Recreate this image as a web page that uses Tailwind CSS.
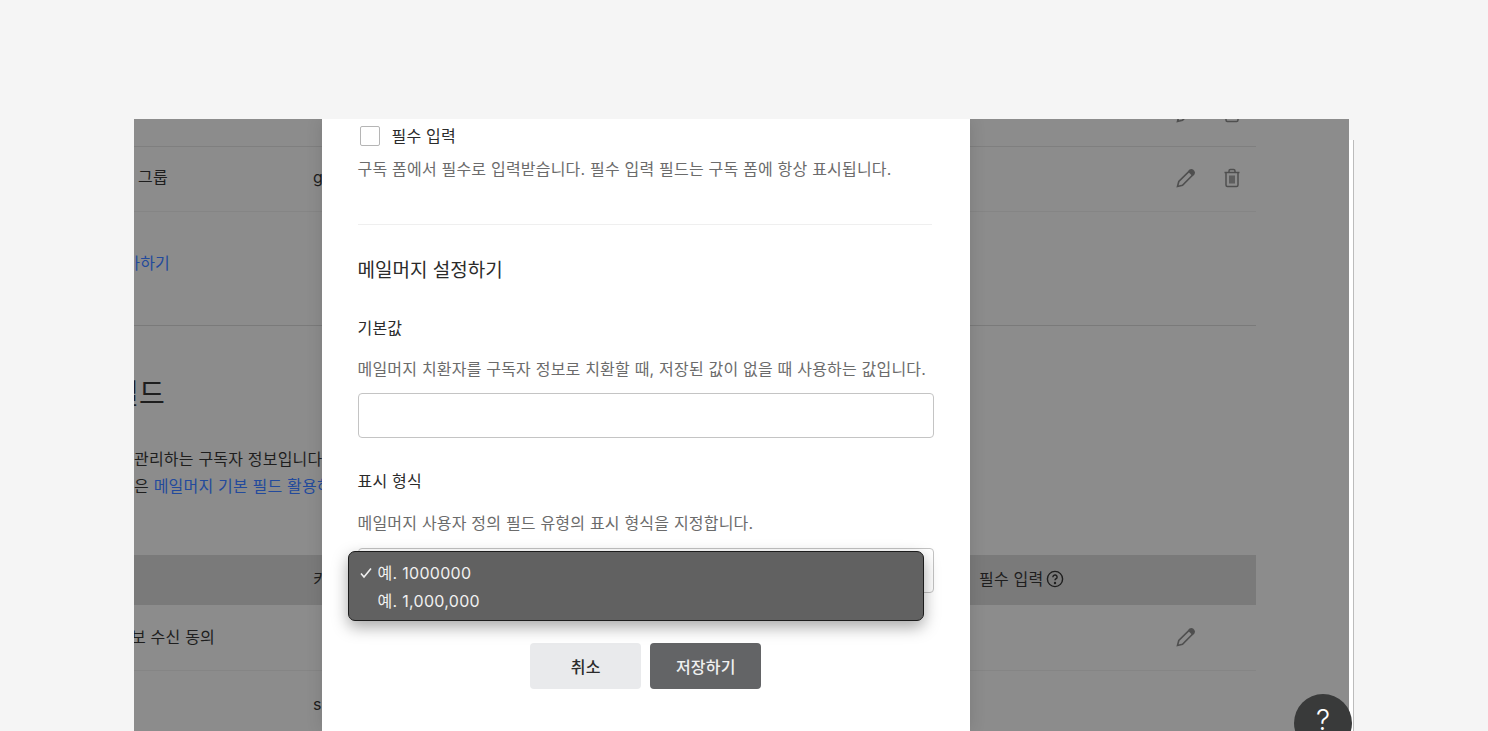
<!DOCTYPE html>
<html lang="ko">

<head>
    <meta charset="UTF-8" />
    <meta name="viewport" content="width=device-width, initial-scale=1.0" />
    <title>메일머지 설정</title>
    <script src="https://cdn.jsdelivr.net/npm/@tailwindcss/browser@4"></script>
</head>

<body class="relative h-[731px] overflow-hidden bg-[#f5f5f5] font-['Inter','Noto_Sans_CJK_KR',sans-serif] text-[16px] leading-6 tracking-[0.2px]">
    <div class="flex h-full pl-[134px] pt-[119px]">
        <!-- Dimmed page behind the modal -->
        <div class="relative h-[612px] w-[1215px] overflow-hidden bg-[#8c8c8c] text-[#1e1e1e]">
            <div class="w-[1122px]">
                <div class="-mt-[37px] flex h-[65px] items-center justify-end gap-[26px] border-b border-[#7f7f7f] pb-[2px] pr-[14px]">
                    <svg class="h-5 w-5 text-[#4f4f4f]" fill="none" stroke="currentColor" stroke-width="1.6" viewBox="0 0 20 20"><path d="M1.5 18.5l1.3-5L13.8 2.6l3.6 3.6L6.5 17.2l-5 1.3z"></path><path d="M14 2.4a2 2 0 012.6-.2l1.2 1.2a2 2 0 01-.2 2.6l-1 1-3.6-3.6 1-1z" fill="currentColor"></path></svg>
                    <svg class="h-5 w-5 text-[#4f4f4f]" fill="none" stroke="currentColor" stroke-width="1.5" viewBox="0 0 20 20"><path d="M2.5 4.5h15M7 4.5V3a1.5 1.5 0 011.5-1.5h3A1.5 1.5 0 0113 3v1.5M4 4.5v12.5a1.5 1.5 0 001.5 1.5h9a1.5 1.5 0 001.5-1.5V4.5M8 7.5v8M10 7.5v8M12 7.5v8"></path></svg>
                </div>
                <div class="flex h-[65px] items-center border-b border-[#858585] pb-[2px]">
                    <span class="mb-[2px] w-[179px] pl-[4px]">그룹</span>
                    <span class="mb-[2px]">group</span>
                    <div class="ml-auto flex gap-[26px] pr-[14px]">
                        <svg class="h-5 w-5 text-[#4f4f4f]" fill="none" stroke="currentColor" stroke-width="1.6" viewBox="0 0 20 20"><path d="M1.5 18.5l1.3-5L13.8 2.6l3.6 3.6L6.5 17.2l-5 1.3z"></path><path d="M14 2.4a2 2 0 012.6-.2l1.2 1.2a2 2 0 01-.2 2.6l-1 1-3.6-3.6 1-1z" fill="currentColor"></path></svg>
                        <svg class="h-5 w-5 text-[#4f4f4f]" fill="none" stroke="currentColor" stroke-width="1.5" viewBox="0 0 20 20"><path d="M2.5 4.5h15M7 4.5V3a1.5 1.5 0 011.5-1.5h3A1.5 1.5 0 0113 3v1.5M4 4.5v12.5a1.5 1.5 0 001.5 1.5h9a1.5 1.5 0 001.5-1.5V4.5M8 7.5v8M10 7.5v8M12 7.5v8"></path></svg>
                    </div>
                </div>
                <div class="flex h-[114px] w-full border-b border-[#7a7a7a]">
                    <div class="mt-[39px] flex h-6 w-[36px] justify-end whitespace-nowrap text-[#234a9c]">필드 추가하기</div>
                </div>

                <div class="mt-[48px] flex h-[40px] w-[31px] justify-end whitespace-nowrap text-[28px] leading-[40px]">사용자 정의 필드</div>
                <div class="mt-[33px] whitespace-nowrap">관리하는 구독자 정보입니다. 구독 폼과 발송 대상에서 사용합니다.</div>
                <div class="mt-[3px] flex h-6 items-center whitespace-nowrap"><span>은&nbsp;</span><span class="text-[#234a9c]">메일머지 기본 필드 활용하기</span></div>

                <div class="mt-[57px] flex h-[50px] items-center bg-[#7a7a7a] pb-[2px]">
                    <span class="w-[179px]"></span>
                    <span class="w-[666px]">키</span>
                    <div class="flex items-center gap-[3px]">
                        <span>필수 입력</span>
                        <svg class="h-[18px] w-[18px]" fill="none" stroke="currentColor" stroke-width="1.4" viewBox="0 0 18 18"><circle cx="9" cy="9" r="7.6"></circle><path d="M6.9 7.2a2.1 2.1 0 114 .8c-.5.7-1.9 1.1-1.9 2.3"></path><circle cx="9" cy="13" r=".5"></circle></svg>
                    </div>
                </div>
                <div class="flex h-[66px] items-center border-b border-[#858585] pb-[2px]">
                    <div class="flex w-[81px] justify-end whitespace-nowrap">광고성 정보 수신 동의</div>
                    <div class="ml-auto pr-[60px]">
                        <svg class="h-5 w-5 text-[#4f4f4f]" fill="none" stroke="currentColor" stroke-width="1.6" viewBox="0 0 20 20"><path d="M1.5 18.5l1.3-5L13.8 2.6l3.6 3.6L6.5 17.2l-5 1.3z"></path><path d="M14 2.4a2 2 0 012.6-.2l1.2 1.2a2 2 0 01-.2 2.6l-1 1-3.6-3.6 1-1z" fill="currentColor"></path></svg>
                    </div>
                </div>
                <div class="flex h-[65px] items-center pl-[179px]">sms</div>
            </div>

            <!-- Modal -->
            <div class="absolute left-[187.5px] top-0 h-full w-[648.5px] bg-white px-[36px] pt-[7px] text-[#6b6b6b] shadow-[0_0_16px_rgba(0,0,0,0.12)]">
                <label class="flex h-5 items-center gap-[12px] pl-[2px] text-[#2b2b2b]">
                    <span class="h-5 w-5 rounded-[2px] border border-[#b5b5b5] bg-white"></span>
                    <span>필수 입력</span>
                </label>
                <p class="mt-[11px]">구독 폼에서 필수로 입력받습니다. 필수 입력 필드는 구독 폼에 항상 표시됩니다.</p>
                <hr class="mt-[43px] mr-[2px] border-[#efefef]" />

                <h3 class="mt-[32px] text-[19px] leading-7 tracking-[0px] text-[#2b2b2b]">메일머지 설정하기</h3>

                <h4 class="mt-[31px] text-[#2b2b2b]">기본값</h4>
                <p class="mt-[17px]">메일머지 치환자를 구독자 정보로 치환할 때, 저장된 값이 없을 때 사용하는 값입니다.</p>
                <input type="text" class="mt-[12px] block h-[45px] w-full rounded-[4px] border border-[#c4c4c4] bg-white" />

                <h4 class="mt-[31px] text-[#2b2b2b]">표시 형식</h4>
                <p class="mt-[18px]">메일머지 사용자 정의 필드 유형의 표시 형식을 지정합니다.</p>
                <div class="relative mt-[13px] h-[45px] rounded-[4px] border border-[#c4c4c4] bg-white">
                    <!-- Open select menu -->
                    <ul class="absolute -left-[11px] top-[2px] h-[70px] w-[576px] rounded-[7px] border border-[#1c1c1c] bg-[#616161] pl-[11px] pt-[7px] text-[16px] leading-7 tracking-[0.3px] text-[#f0f0f0] shadow-[0_6px_16px_rgba(0,0,0,0.35)]">
                        <li class="flex">
                            <svg class="mt-[8px] h-3 w-3 shrink-0" fill="none" stroke="currentColor" stroke-width="1.6" viewBox="0 0 12 12"><path d="M1 6.5l3 3.5L11 1.5"></path></svg>
                            <span class="ml-[6px]">예. 1000000</span>
                        </li>
                        <li class="pl-[18px]">예. 1,000,000</li>
                    </ul>
                </div>
                <div class="mt-[50px] flex justify-center gap-[9px]">
                    <button class="h-[46px] w-[111px] rounded-[4px] bg-[#e9eaec] pt-[1px] font-medium text-[#2b2b2b]">취소</button>
                    <button class="h-[46px] w-[111px] rounded-[4px] bg-[#636466] pt-[1px] font-medium text-[#f0f0f0]">저장하기</button>
                </div>
            </div>
        </div>
        <div class="mt-[21px] h-[591px] w-[5px] border-r border-[#bcbcbc] bg-white"></div>
    </div>

    <!-- Help button -->
    <button class="absolute left-[1294px] top-[694px] flex h-[58px] w-[58px] items-start justify-center rounded-full bg-[#393a3a] pt-[8px] text-[28px] font-light leading-9 tracking-normal text-white">?</button>
</body>

</html>
